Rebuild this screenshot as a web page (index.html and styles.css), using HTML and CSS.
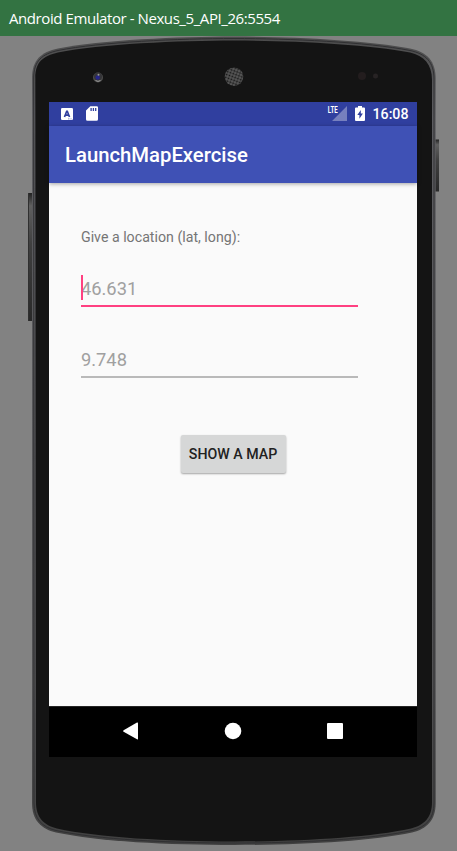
FILE: index.html
```html
<!DOCTYPE html>
<html lang="en">
<head>
<meta charset="utf-8">
<title>Android Emulator - Nexus_5_API_26:5554</title>
<link rel="stylesheet" href="styles.css">
</head>
<body>
<header class="titlebar"><span>Android Emulator - Nexus_5_API_26:5554</span></header>
<main class="desktop">
  <svg class="device" width="457" height="815" viewBox="0 36 457 815" aria-hidden="true">
    <defs>
      <linearGradient id="rim" x1="0" y1="0" x2="0" y2="1">
        <stop offset="0" stop-color="#4b4b4b"/><stop offset=".1" stop-color="#5c5c60"/><stop offset=".8" stop-color="#505052"/><stop offset="1" stop-color="#404040"/>
      </linearGradient>
      <linearGradient id="key" x1="0" y1="0" x2="0" y2="1">
        <stop offset="0" stop-color="#222"/><stop offset=".1" stop-color="#606060"/><stop offset=".4" stop-color="#404040"/><stop offset="1" stop-color="#292929"/>
      </linearGradient>
      <pattern id="mesh" width="3" height="3" patternUnits="userSpaceOnUse" patternTransform="rotate(20)">
        <rect width="3" height="3" fill="#5a5a5a"/><circle cx="1.5" cy="1.5" r="1.05" fill="#161616"/>
      </pattern>
    </defs>
    <rect x="28" y="193" width="5" height="128" fill="url(#key)"/>
    <rect x="28" y="193" width="1" height="128" fill="#303030"/>
    <rect x="435" y="139.500" width="4" height="52" fill="url(#key)"/>
    <path fill="url(#rim)" d="M32 78C32 60 41 52 58 48.500C100 40 180 36.500 234 36.500S368 40 410 48.500C427 52 435.700 61 435.700 79V803C435.700 820 427 829 412 832.500C370 841.500 300 845 234 845S98 841.500 56 832.500C41 829 32 820 32 803Z"/>
    <path fill="none" stroke="#303032" stroke-width="1" d="M33.700 78C33.700 61 42 54 58 50.500C100 42 180 38.500 234 38.500S368 42 410 50.500C426 54 434 62 434 79V803C434 819 426 827 412 830.500C370 839.500 300 843 234 843S98 839.500 56 830.500C42 827 34 819 34 803Z"/>
    <path fill="#141414" d="M35.300 78C35.300 62 43 56 58 52.500C100 44 180 40.500 234 40.500S368 44 410 52.500C424 56 432 64 432 80V802C432 818 424 825 411 828.500C370 837.500 300 841.500 234 841.500S98 837.500 57 828.500C44 825 36 818 36 802Z"/>
    <circle cx="98" cy="77.500" r="5" fill="#4c4c4c"/>
    <circle cx="98" cy="76.500" r="4" fill="#353538"/>
    <circle cx="97.700" cy="77.500" r="2.200" fill="#25258a"/>
    <circle cx="98.500" cy="74.800" r="1" fill="#999"/>
    <path d="M95.500 80.500a4.300 4.300 0 0 0 5 0" fill="none" stroke="#999" stroke-width="1"/>
    <circle cx="234" cy="76.700" r="9.300" fill="url(#mesh)"/>
    <circle cx="362" cy="76" r="4" fill="#231d1e"/><circle cx="375.500" cy="76" r="2.500" fill="#272324"/>
  </svg>

  <section class="screen">
    <div class="status">
      <svg class="ic-input" width="12" height="12" viewBox="0 0 12 12"><rect width="12" height="12" rx="1.300" fill="#fff"/><path d="M3.500 9 5.700 3.300h.6L8.500 9M4.300 7.200h3.400" fill="none" stroke="#303f9f" stroke-width="1.700"/><path d="M7 10.900h3.500" stroke="#303f9f" stroke-width=".6" stroke-dasharray="1 .5"/></svg>
      <svg class="ic-sd" width="12" height="15" viewBox="0 0 12 15"><path fill="#fff" d="M4.300.3h6.400A1.300 1.300 0 0 1 12 1.600v11.600a1.500 1.500 0 0 1-1.500 1.500h-9A1.500 1.500 0 0 1 0 13.200V4.500Z"/><path d="M5.100 2v3M7.400 2v3M9.700 2v3" stroke="#303f9f" stroke-width="1.300"/></svg>
      <span class="lte">LTE</span>
      <svg class="ic-signal" width="15" height="15" viewBox="0 0 15 15"><path d="M15 0V15H0L6.500 8.500H7V8L10.500 4.500Z" fill="#7780be"/></svg>
      <svg class="ic-battery" width="10" height="15" viewBox="0 0 10 15"><path fill="#fff" d="M3 0h4v1.500h2a1 1 0 0 1 1 1V14a1 1 0 0 1-1 1H1a1 1 0 0 1-1-1V2.500a1 1 0 0 1 1-1h2Z"/><path fill="#303f9f" d="M5.800 4 2.300 9h2.100v3.700L7.900 7.500H5.800Z"/></svg>
      <span class="time">16:08</span>
    </div>
    <div class="toolbar">LaunchMapExercise</div>
    <div class="content">
      <div class="label">Give a location (lat, long):</div>
      <div class="field focused"><i class="caret"></i><span>46.631</span></div>
      <div class="field second"><span>9.748</span></div>
      <button class="show">SHOW A MAP</button>
    </div>
    <nav class="nav">
      <svg width="16" height="18" viewBox="0 0 16 18"><path fill="#fff" d="M.6 8.200 14 .6q1-.4 1 .6v15.600q0 1-1 .5L.6 9.800q-1-.8 0-1.600Z"/></svg>
      <svg width="18" height="18" viewBox="0 0 18 18"><circle cx="9" cy="9" r="8.300" fill="#fff"/></svg>
      <svg width="16" height="16" viewBox="0 0 16 16"><rect width="16" height="16" rx="1" fill="#fff"/></svg>
    </nav>
  </section>
</main>
</body>
</html>
```

FILE: styles.css
```css
* { box-sizing: border-box; }
body { margin: 0; width: 457px; height: 851px; overflow: hidden; background: #828282; font-family: Roboto, sans-serif; }
svg { display: block; flex: none; }
.titlebar { height: 36px; padding: 0 0 1px 9px; display: flex; align-items: center; background: #337342; color: #fff; font: 15px/20px "Open Sans", sans-serif; letter-spacing: -0.42px; white-space: nowrap; }
.desktop { position: relative; height: 815px; padding: 66px 40px 0 49px; }
.device { position: absolute; left: 0; top: 0; }
.screen { position: relative; width: 368px; height: 655px; display: flex; flex-direction: column; background: #fafafa; }
.status { height: 24px; display: flex; align-items: center; background: #303f9f; color: #fff; padding: 0 8.500px 0 12px; }
.ic-sd { margin: -1px 0 0 13px; }
.lte { margin-left: auto; align-self: flex-start; margin-top: 4px; margin-right: -6px; transform: scaleX(.72); transform-origin: right; font: 700 8.5px/9px Roboto, sans-serif; letter-spacing: 0; }
.ic-signal { margin-top: -1px; }
.ic-battery { margin: -1px 8px 0; }
.time { font-size: 14.2px; font-weight: 500; }
.toolbar { position: relative; height: 57px; padding-left: 16px; line-height: 59px; background: #3f51b5; color: #fff; font-size: 20.3px; font-weight: 500; box-shadow: 0 1px 4px rgba(0,0,0,.35); }
.content { flex: 1; padding: 45px 32px 0; display: flex; flex-direction: column; overflow: hidden; }
.label { font-size: 14.2px; line-height: 18px; color: #757575; }
.field { position: relative; width: 277px; height: 35px; margin-top: 26px; padding-top: 5px; font-size: 18.3px; line-height: 24px; color: #a0a0a0; border-bottom: 2px solid #b9b9b9; }
.focused { border-color: #ff4081; }
.second { margin-top: 36px; }
.caret { position: absolute; left: 0; top: 3px; width: 2px; height: 25px; background: #ff4081; }
.show { align-self: center; width: 105px; height: 38px; margin: 57px 0 0 0; padding: 0; border: 0; border-radius: 2px; background: #d6d7d7; box-shadow: 0 1px 2px rgba(0,0,0,.35); color: #212121; font: 500 14.2px/38px Roboto, sans-serif; white-space: nowrap; }
.nav { height: 51px; padding: 0 74px 2px; display: flex; align-items: center; justify-content: space-between; background: #000; border-top: 1px solid #252525; }
```
